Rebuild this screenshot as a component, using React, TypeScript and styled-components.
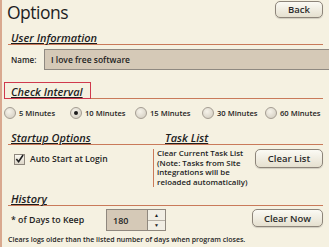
import * as React from 'react';
import styled, { createGlobalStyle, css } from 'styled-components';

const GlobalStyle = createGlobalStyle`
  html, body { margin: 0; padding: 0; background: #f5f1e1; }
  body { font-family: "Open Sans", "Noto Sans", sans-serif; color: #1e1e1e; }
`;

const line = '#c97a5a';

const Page = styled.div`
  width: 329px;
  height: 247px;
  box-sizing: border-box;
  border-left: 2px solid #d9a98f;
  background: #f5f1e1;
  padding: 1px 6px 0 6px;
  overflow: hidden;
  display: flex;
  flex-direction: column;
`;

const Header = styled.div`
  display: flex;
  justify-content: space-between;
  align-items: flex-start;
  height: 22px;
`;

const Title = styled.h1`
  margin: 0 0 0 -1px;
  font-size: 17.5px;
  font-weight: 500;
  line-height: 22px;
  letter-spacing: -0.5px;
`;

const Button = styled.button<{ $w: number; $h: number }>(({ $w, $h }) => css`
  width: ${$w}px;
  height: ${$h}px;
  flex: none;
  border: 1px solid #8d857a;
  border-radius: 5px;
  background: linear-gradient(#fbfaf4, #e5e0cf);
  box-shadow: 0 1px 1px rgba(0, 0, 0, 0.15);
  font-family: inherit;
  font-size: 9.5px;
  font-weight: 600;
  color: #2a2a2a;
  padding: 0;
`);

const Section = styled.div<{ $mt: number }>`
  margin-top: ${p => p.$mt}px;
`;

const Heading = styled.div<{ $boxed?: boolean }>`
  position: relative;
  font-size: 11px;
  font-weight: 600;
  font-style: italic;
  text-decoration: underline;
  text-underline-offset: 1px;
  padding: 0 0 0 3px;
  border-bottom: 1px solid ${line};
  line-height: 13px;
  height: 13px;
  ${p => p.$boxed && css`
    &::before {
      content: '';
      position: absolute;
      left: -4px;
      top: -3px;
      width: 87px;
      bottom: -1px;
      border: 1.5px solid #d0394d;
      box-sizing: border-box;
    }
  `}
`;

const NameRow = styled.div`
  display: flex;
  align-items: center;
  margin-top: 4px;
  font-size: 8px;
  font-weight: 600;
  margin-right: -10px;
`;

const Label = styled.span`
  padding-left: 3px;
  width: 33px;
`;

const TextInput = styled.div`
  flex: 1;
  height: 21px;
  box-sizing: border-box;
  background: #d5c9b7;
  border: 1px solid #8f8981;
  padding-left: 6px;
  display: flex;
  align-items: center;
  font-size: 8.5px;
  font-weight: 600;
`;

const RadioRow = styled.div`
  display: grid;
  grid-template-columns: 66px 65px 67px 63px auto;
  align-items: center;
  margin: 8px 0 0 -4px;
  font-size: 7.6px;
  font-weight: 600;
  white-space: nowrap;
`;

const RadioItem = styled.label`
  display: flex;
  align-items: center;
  gap: 3px;
`;

const RadioDot = styled.span<{ $on?: boolean }>`
  width: 12px;
  height: 12px;
  border-radius: 50%;
  box-sizing: border-box;
  border: 1px solid #a49d92;
  background: radial-gradient(circle at 40% 35%, #f6f3ea, #cfc9bc);
  display: flex;
  align-items: center;
  justify-content: center;
  &::after {
    content: '';
    width: 4px;
    height: 4px;
    border-radius: 50%;
    background: ${p => (p.$on ? '#1c1c1c' : 'transparent')};
  }
`;

const Columns = styled.div`
  display: grid;
  grid-template-columns: 154px 1fr;
  border-bottom: 1px solid ${line};
  padding-left: 3px;
  font-size: 11px;
  font-weight: 600;
  font-style: italic;
  line-height: 13px;
  height: 13px;
  margin-top: 12px;
`;

const UnderlineText = styled.span`
  text-decoration: underline;
  text-underline-offset: 1px;
`;

const Body = styled.div`
  display: grid;
  grid-template-columns: 145px 1fr;
  margin-top: 4px;
`;

const CheckRow = styled.label`
  display: flex;
  align-items: center;
  gap: 5px;
  padding: 4px 0 0 6px;
  align-self: start;
  font-size: 8.6px;
  font-weight: 600;
`;

const CheckBox = styled.span`
  width: 11px;
  height: 11px;
  box-sizing: border-box;
  border: 1px solid #8e877d;
  background: linear-gradient(#fbf9f2, #dcd6c8);
  display: flex;
  align-items: center;
  justify-content: center;
`;

const TaskBox = styled.div`
  display: flex;
  justify-content: space-between;
  align-items: flex-start;
`;

const TaskNote = styled.div`
  border-left: 1px solid ${line};
  padding-left: 3px;
  font-size: 7.9px;
  font-weight: 600;
  line-height: 9.5px;
  white-space: nowrap;
`;

const HistoryRow = styled.div`
  display: flex;
  align-items: flex-start;
  margin-top: 3px;
  font-size: 8.8px;
  font-weight: 600;
`;

const DaysLabel = styled.span`
  width: 95px;
  padding-left: 3px;
  line-height: 22px;
`;

const Spin = styled.div`
  display: flex;
  height: 22px;
  box-sizing: border-box;
  border: 1px solid #8f887e;
`;

const SpinValue = styled.div`
  width: 40px;
  background: #d5c9b7;
  padding-left: 6px;
  display: flex;
  align-items: center;
  font-size: 9px;
  box-sizing: border-box;
`;

const SpinArrows = styled.div`
  width: 17px;
  display: flex;
  flex-direction: column;
  border-left: 1px solid #8f887e;
  background: #f1eee4;
  & > span {
    flex: 1;
    display: flex;
    align-items: center;
    justify-content: center;
    font-size: 5px;
  }
  & > span + span { border-top: 1px solid #b5afa5; }
`;

const Spacer = styled.span`
  flex: 1;
`;

const Footer = styled.div`
  font-size: 7px;
  font-weight: 600;
  line-height: 9px;
  margin-top: 4px;
  white-space: nowrap;
`;

const options = ['5 Minutes', '10 Minutes', '15 Minutes', '30 Minutes', '60 Minutes'];

const App = () => (
  <Page>
    <GlobalStyle />
    <Header>
      <Title>Options</Title>
      <Button $w={48} $h={17}>Back</Button>
    </Header>
    <Section $mt={8}>
      <Heading>User Information</Heading>
      <NameRow>
        <Label>Name:</Label>
        <TextInput>I love free software</TextInput>
      </NameRow>
    </Section>
    <Section $mt={15}>
      <Heading $boxed>Check Interval</Heading>
      <RadioRow>
        {options.map(o => (
          <RadioItem key={o}>
            <RadioDot $on={o === '10 Minutes'} />
            {o}
          </RadioItem>
        ))}
      </RadioRow>
    </Section>
    <Columns>
      <UnderlineText>Startup Options</UnderlineText>
      <UnderlineText>Task List</UnderlineText>
    </Columns>
    <Body>
      <CheckRow>
        <CheckBox>
          <svg width="10" height="10" viewBox="0 0 10 10">
            <path d="M1.5 5 L4 8 L9 0.5" fill="none" stroke="#222" strokeWidth="1.8" />
          </svg>
        </CheckBox>
        Auto Start at Login
      </CheckRow>
      <TaskBox>
        <TaskNote>
          Clear Current Task List<br />
          (Note: Tasks from Site<br />
          integrations will be<br />
          reloaded automatically)
        </TaskNote>
        <Button $w={68} $h={19}>Clear List</Button>
      </TaskBox>
    </Body>
    <Section $mt={5}>
      <Heading>History</Heading>
      <HistoryRow>
        <DaysLabel>* of Days to Keep</DaysLabel>
        <Spin>
          <SpinValue>180</SpinValue>
          <SpinArrows>
            <span>▲</span>
            <span>▼</span>
          </SpinArrows>
        </Spin>
        <Spacer />
        <Button $w={71} $h={18}>Clear Now</Button>
      </HistoryRow>
    </Section>
    <Footer>Clears logs older than the listed number of days when program closes.</Footer>
  </Page>
);

export default App;
